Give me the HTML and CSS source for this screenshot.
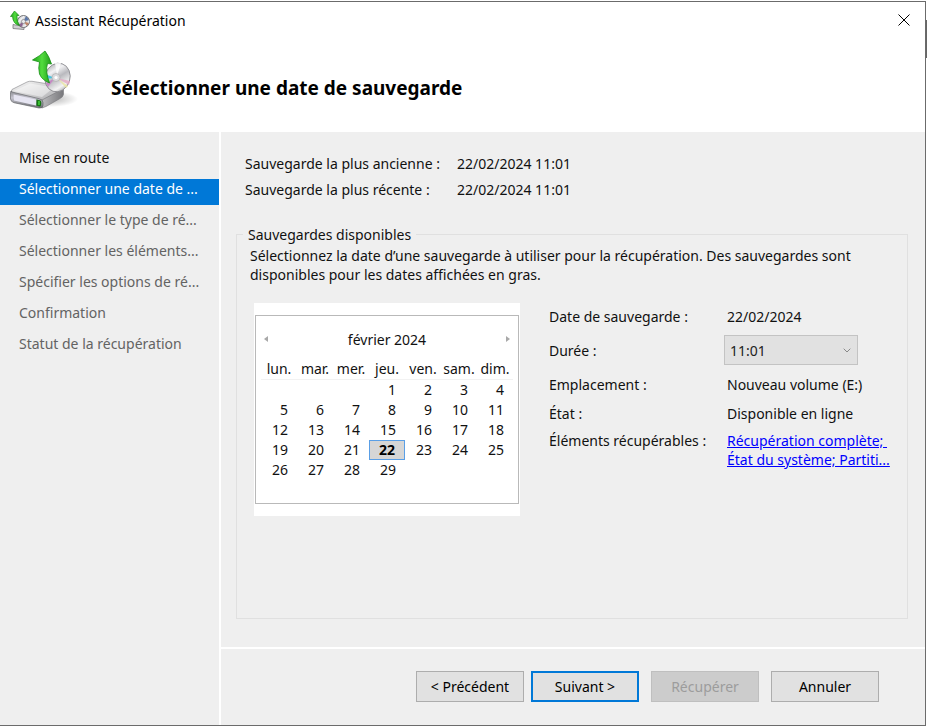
FILE: index.html
```html
<!DOCTYPE html>
<html lang="fr">
<head>
<meta charset="utf-8">
<title>Assistant Récupération</title>
<link rel="stylesheet" href="styles.css">
</head>
<body>
<svg class="defs" aria-hidden="true">
  <defs>
    <linearGradient id="arrow" x1="0" x2="1"><stop offset="0" stop-color="#1fa01a"/><stop offset=".5" stop-color="#52dc3e"/><stop offset="1" stop-color="#1f9a19"/></linearGradient>
    <linearGradient id="disc" x1="0" y1="0" x2="1" y2="1"><stop offset="0" stop-color="#8e8e92"/><stop offset=".3" stop-color="#f2f2f4"/><stop offset=".5" stop-color="#b9b9be"/><stop offset=".75" stop-color="#f4f4f4"/><stop offset="1" stop-color="#77777b"/></linearGradient>
    <linearGradient id="top" x1="0" x2="1" y1="0" y2="1"><stop offset="0" stop-color="#fafafa"/><stop offset="1" stop-color="#a8a8ab"/></linearGradient>
    <linearGradient id="front" x1="0" x2="0" y1="0" y2="1"><stop offset="0" stop-color="#8a8b8f"/><stop offset=".4" stop-color="#c6c5d0"/><stop offset="1" stop-color="#6a6b6f"/></linearGradient>
    <linearGradient id="side" x1="0" x2="1"><stop offset="0" stop-color="#bcbcbe"/><stop offset="1" stop-color="#77777b"/></linearGradient>
    <radialGradient id="shade"><stop offset="0" stop-color="#000" stop-opacity=".3"/><stop offset="1" stop-color="#000" stop-opacity="0"/></radialGradient>
    <symbol id="recovery" viewBox="0 0 68 60">
      <ellipse cx="40" cy="49" rx="28" ry="8" fill="url(#shade)"/>
      <path d="M2 39.500 17 32Q19 31 22 31.300L51 36Q54 37 53 39L36 49Q33 50.500 30 50L3 43.500Q0 42 2 39.500Z" fill="url(#top)" stroke="#929295" stroke-width=".7"/>
      <path d="M4 41 20 33.500 44 37.500 32 47Z" fill="#fff" opacity=".45"/>
      <path d="M32 50 53.500 38.500V44.500Q53 47 50 48.500L36 56.500 32 58Z" fill="url(#side)" stroke="#77777b" stroke-width=".6"/>
      <path d="M1 41Q0 43 .5 49 1 52 4 52.700L29 58Q33 58.500 33 55.500V52.500Q33 49.500 29 48.700L4 42.500Q2 42 1 41Z" fill="url(#front)" stroke="#66676b" stroke-width=".7"/>
      <path d="M3.500 44.500 26 49.500V55.500L4 50.500Z" fill="#e6e5f2"/>
      <path d="M26.500 49.500 30 50.200Q31.500 51 31.300 53 31 56.500 30 56.500L26.500 55.700Z" fill="#137812"/><path d="M29 51V55" stroke="#4fe043" stroke-width="1.300"/>
      <ellipse cx="47.500" cy="27.500" rx="12.500" ry="14.500" transform="rotate(18 47.500 27.500)" fill="url(#disc)" stroke="#88888c" stroke-width=".8"/>
      <path d="M47 28 60 31 59 35Z" fill="#e3a7c3" opacity=".8"/><path d="M47 28 58 36 56 38Z" fill="#ece6a0" opacity=".8"/>
      <path d="M45 28 35 24 34 29Z" fill="#45c3df"/><path d="M45 28 36 33 38 37Z" fill="#ca72c5" opacity=".7"/>
      <path d="M47 26 45 13 51 13Z" fill="#fff" opacity=".8"/>
      <circle cx="46" cy="27.500" r="4" fill="#dadadd" stroke="#aaa" stroke-width=".6"/><circle cx="46" cy="27.500" r="1.600" fill="#fff"/>
      <path d="M35 1Q39 6 41.500 14L37.500 13.500Q35 21 39.500 33 32 30 29.500 24 28 18 29.500 12L22.500 10Q30 6 35 1Z" fill="url(#arrow)" stroke="#178f15" stroke-width=".8" stroke-linejoin="round"/>
    </symbol>
  </defs>
</svg>
<div class="window">
  <header class="header">
    <div class="titlebar">
      <svg class="small-icon" viewBox="0 0 20 20" aria-hidden="true">
        <path d="M3 14.500 14 16.500V19.500L3 18.500Z" fill="#d0d0d2" stroke="#77777a" stroke-width=".8"/>
        <circle cx="13.500" cy="11.500" r="6" fill="url(#disc)" stroke="#66666b" stroke-width=".9"/>
        <path d="M13.500 11.500 16 6 19 10Z" fill="#5b77a8"/><path d="M13.500 11.500 19 13 17 16Z" fill="#c08468"/><path d="M13.500 11.500 8.500 15 12 17Z" fill="#8d6590"/>
        <circle cx="13.500" cy="11.500" r="2" fill="#e9e9ec" stroke="#777" stroke-width=".6"/>
        <path d="M4.500 1 9 5.500H7Q6.500 11 9.500 15.500 3 14 2.500 6.500L.5 6.500Z" fill="url(#arrow)" stroke="#178f15" stroke-width=".7" stroke-linejoin="round"/>
      </svg>
      <span class="caption">Assistant Récupération</span>
      <button class="close" type="button" aria-label="Fermer"><svg viewBox="0 0 12 12" aria-hidden="true"><path d="M.5.5l11 11M11.500.5l-11 11"/></svg></button>
    </div>
    <div class="banner">
      <svg class="big-icon" aria-hidden="true"><use href="#recovery"/></svg>
      <h1>Sélectionner une date de sauvegarde</h1>
    </div>
  </header>
  <div class="body">
    <nav class="steps">
      <ol>
        <li class="done">Mise en route</li>
        <li class="current" aria-current="step">Sélectionner une date de ...</li>
        <li>Sélectionner le type de ré...</li>
        <li>Sélectionner les éléments...</li>
        <li>Spécifier les options de ré...</li>
        <li>Confirmation</li>
        <li>Statut de la récupération</li>
      </ol>
    </nav>
    <div class="content">
      <main class="page">
        <dl class="range">
          <dt>Sauvegarde la plus ancienne :</dt><dd>22/02/2024 11:01</dd>
          <dt>Sauvegarde la plus récente :</dt><dd>22/02/2024 11:01</dd>
        </dl>
        <fieldset class="group">
          <legend>Sauvegardes disponibles</legend>
          <p class="intro">Sélectionnez la date d’une sauvegarde à utiliser pour la récupération. Des sauvegardes sont disponibles pour les dates affichées en gras.</p>
          <div class="columns">
            <div class="calendar-box">
              <div class="calendar">
                <div class="month">
                  <button class="prev" type="button" aria-label="Mois précédent"></button>
                  <span>février 2024</span>
                  <button class="next" type="button" aria-label="Mois suivant"></button>
                </div>
                <table>
                  <thead><tr><th>lun.</th><th>mar.</th><th>mer.</th><th>jeu.</th><th>ven.</th><th>sam.</th><th>dim.</th></tr></thead>
                  <tbody>
                    <tr><td></td><td></td><td></td><td>1</td><td>2</td><td>3</td><td>4</td></tr>
                    <tr><td>5</td><td>6</td><td>7</td><td>8</td><td>9</td><td>10</td><td>11</td></tr>
                    <tr><td>12</td><td>13</td><td>14</td><td>15</td><td>16</td><td>17</td><td>18</td></tr>
                    <tr><td>19</td><td>20</td><td>21</td><td class="selected">22</td><td>23</td><td>24</td><td>25</td></tr>
                    <tr><td>26</td><td>27</td><td>28</td><td>29</td><td></td><td></td><td></td></tr>
                  </tbody>
                </table>
              </div>
            </div>
            <div class="details">
              <span>Date de sauvegarde :</span><span>22/02/2024</span>
              <label for="time">Durée :</label>
              <div class="combo">
                <select id="time" disabled><option>11:01</option></select>
                <svg viewBox="0 0 8 5" aria-hidden="true"><path d="M.7.7 4 4 7.300.7"/></svg>
              </div>
              <span>Emplacement :</span><span>Nouveau volume (E:)</span>
              <span>État :</span><span>Disponible en ligne</span>
              <span>Éléments récupérables :</span><a href="#">Récupération complète;&nbsp;<br>État du système; Partiti...</a>
            </div>
          </div>
        </fieldset>
      </main>
      <footer class="actions">
        <button type="button">&lt; Précédent</button>
        <button class="default" type="button">Suivant &gt;</button>
        <button class="apart" type="button" disabled>Récupérer</button>
        <button class="apart" type="button">Annuler</button>
      </footer>
    </div>
  </div>
</div>
</body>
</html>
```
FILE: styles.css
```css
* { box-sizing: border-box; }

body {
  margin: 0;
  min-height: 100vh;
  padding: 1px 1px 1px 0;
  display: flex;
  background: linear-gradient(#fff 20px, #666 20px, #666 58px, #fff 58px);
  color: #111;
  font: 14px/19px "Noto Sans", "Open Sans", sans-serif;
}

.defs { position: absolute; width: 0; height: 0; }

button, select { font: inherit; color: inherit; }

.window {
  flex: 1;
  display: flex;
  flex-direction: column;
  background: #efefef;
  border: solid #6b6b6b;
  border-width: 1px 1px 1px 0;
}

.header { height: 130px; background: #fff; }

.titlebar { display: flex; align-items: center; height: 36px; padding: 0 7px 0 10px; }
.small-icon { width: 20px; height: 20px; margin-right: 5px; }
.caption { flex: 1; color: #000; }
.close { width: 28px; height: 28px; padding: 8px; border: 0; background: none; }
.close svg { display: block; width: 12px; height: 12px; overflow: visible; stroke: #000; fill: none; }

.banner { display: flex; align-items: center; gap: 33px; padding: 12px 10px 0; }
.big-icon { width: 68px; height: 60px; }
h1 { margin: 0; padding-top: 16px; font-size: 19px; line-height: 24px; color: #000; }

.body { flex: 1; display: flex; }

.steps { width: 221px; border-right: 2px solid #fff; }
.steps ol {
  margin: 0;
  padding: 16px 0 0;
  list-style: none;
  display: flex;
  flex-direction: column;
  gap: 5px;
}
.steps li { height: 26px; padding-left: 19px; line-height: 20px; white-space: nowrap; color: #636363; }
.steps .done { color: #111; }
.steps .current { background: #0078d7; color: #fff; }

.content { flex: 1; min-width: 0; display: flex; flex-direction: column; }
.page { flex: 1; display: flex; flex-direction: column; padding: 19px 17px 28px 15px; }

.range {
  display: grid;
  grid-template-columns: 204px 1fr;
  gap: 7px 8px;
  margin: 3px 0 26px;
  padding-left: 9px;
}
.range dd { margin: 0; }

.group { flex: 1; min-width: 0; margin: 0; padding: 2px 13px 12px; border: 1px solid #e0e0e0; }
.group legend { margin-left: -7px; padding: 0 5px; }
.intro { margin: 0 0 19px; max-width: 620px; }

.columns { display: flex; align-items: flex-start; padding-left: 4px; gap: 29px; }

.calendar-box { flex: none; background: #fff; padding: 12px 1px; }
.calendar { height: 189px; padding: 13px 5px 0; border: 1px solid #b9b9b9; }
.month { display: flex; justify-content: space-between; align-items: center; padding: 0 3px; height: 20px; }
.month button { width: 4px; height: 6px; padding: 0; border: 0; background: #a8a8a8; }
.prev { clip-path: polygon(100% 0, 100% 100%, 0 50%); }
.next { clip-path: polygon(0 0, 100% 50%, 0 100%); }

table { width: 252px; margin-top: 9px; table-layout: fixed; border-collapse: separate; border-spacing: 0; }
th { height: 22px; padding: 0; font-weight: normal; line-height: 20px; text-align: center; border-bottom: 1px solid #f2f2f2; }
td { height: 20px; padding: 0 9px 0 0; line-height: 18px; text-align: right; }
.selected { font-weight: bold; color: #000; background: #d6d6d6; border: 1px solid #5a9fe6; }

.details {
  flex: 1;
  display: grid;
  grid-template-columns: 178px 1fr;
  grid-template-rows: 27px 40px 29px 28px auto;
  align-items: center;
}
.details a { color: #00f; }
.details > :nth-last-child(-n+2) { align-self: start; padding-top: 4px; }

.combo { position: relative; width: 134px; margin-left: -3px; }
.combo select {
  appearance: none;
  display: block;
  width: 100%;
  height: 30px;
  padding: 0 5px;
  border: 1px solid #c3c3c3;
  border-radius: 0;
  background: #e1e1e1;
  color: #222;
  opacity: 1;
}
.combo svg { position: absolute; right: 7px; top: 13px; width: 8px; height: 5px; fill: none; stroke: #888; pointer-events: none; }

.actions {
  display: flex;
  align-items: flex-start;
  justify-content: flex-end;
  gap: 7px;
  height: 78px;
  padding: 22px 46px 0;
  border-top: 2px solid #fff;
}
.actions button { width: 108px; height: 31px; padding: 0; border: 1px solid #adadad; background: #e1e1e1; color: #000; }
.actions .default { border: 2px solid #0078d7; }
.actions .apart { margin-left: 5px; }
.actions :disabled { background: #ccc; border-color: #bfbfbf; color: #9c9c9c; }
```
